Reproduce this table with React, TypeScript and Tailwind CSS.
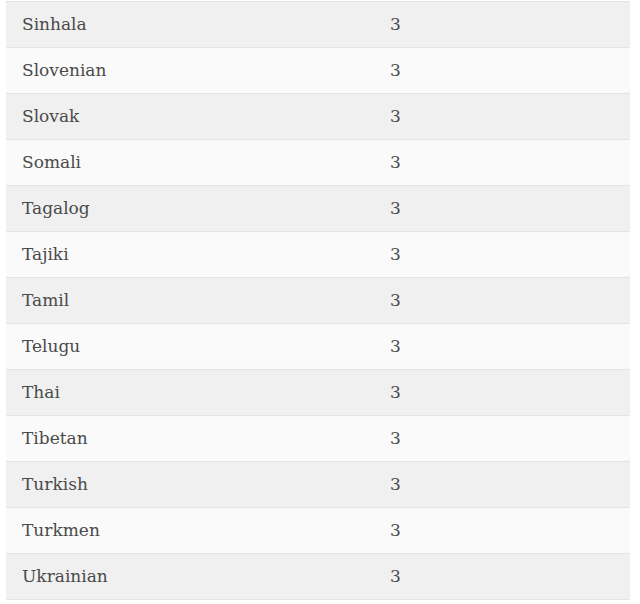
const rows = [
  'Sinhala',
  'Slovenian',
  'Slovak',
  'Somali',
  'Tagalog',
  'Tajiki',
  'Tamil',
  'Telugu',
  'Thai',
  'Tibetan',
  'Turkish',
  'Turkmen',
  'Ukrainian',
];

export default function App() {
  return (
    <div className="min-h-[604px] bg-white pl-[6px] pr-[10px] pt-[1px] font-['DejaVu_Serif',serif] text-[17px] text-[#4a4a4a]">
      <table className="w-full border-collapse">
        <tbody>
          {rows.map((lang, i) => (
            <tr
              key={lang}
              className={`h-[46px] border-y border-[#e4e4e4] ${i % 2 === 0 ? 'bg-[#f0f0f0]' : 'bg-[#fafafa]'}`}
            >
              <td className="w-[368px] px-4 align-middle">{lang}</td>
              <td className="px-4 align-middle">3</td>
            </tr>
          ))}
        </tbody>
      </table>
    </div>
  );
}
